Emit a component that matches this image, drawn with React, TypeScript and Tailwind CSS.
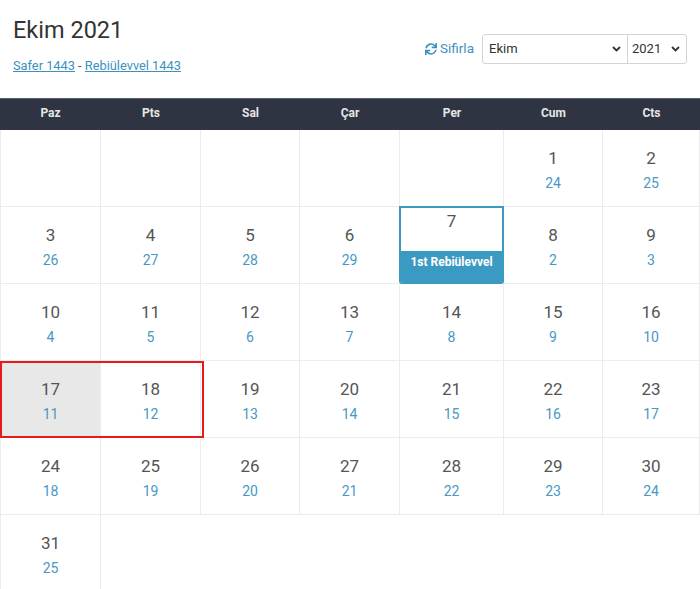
import { FaSync } from "react-icons/fa";

const days = ["Paz", "Pts", "Sal", "Çar", "Per", "Cum", "Cts"];

type Cell = { d: number; h: number } | null;

const cells: Cell[] = [
  null, null, null, null, null,
  { d: 1, h: 24 }, { d: 2, h: 25 },
  ...Array.from({ length: 29 }, (_, i) => {
    const d = i + 3;
    const h = d <= 6 ? d + 23 : d - 6;
    return { d, h };
  }),
];

const cols = "grid grid-cols-[101px_100px_99px_100px_104px_99px_97px]";

function DayCell({ cell, idx }: { cell: Cell; idx: number }) {
  const base = "h-[77px] border-b border-r border-[#ececec]";
  if (!cell) {
    return <div className={`${base} ${idx === 0 ? "border-l" : ""}`} />;
  }
  if (cell.d === 7) {
    return (
      <div className={`${base} relative`}>
        <div className="absolute -left-px -top-px -right-px -bottom-px flex flex-col border-2 border-[#3b9ac2] rounded-b-[3px] overflow-hidden">
          <div className="flex-1 bg-white text-center text-[17px] leading-[20px] text-[#555] pt-[3px]">
            7
          </div>
          <div className="h-[31px] bg-[#3b9ac2] text-center text-[12px] font-bold text-white pt-[2px]">
            1st Rebiülevvel
          </div>
        </div>
      </div>
    );
  }
  const col = idx % 7;
  return (
    <div
      className={`${base} ${col === 0 ? "border-l" : ""} ${cell.d === 17 ? "bg-[#e8e8e8]" : "bg-white"} flex flex-col items-center pt-[18px]`}
    >
      <span className="text-[17px] leading-[20px] text-[#555]">{cell.d}</span>
      <span className="text-[14px] leading-[18px] mt-[6px] text-[#4898c4]">{cell.h}</span>
    </div>
  );
}

export default function App() {
  return (
    <div className="w-[700px] h-[589px] overflow-hidden bg-white font-['Roboto',sans-serif]">
      <div className="h-[98px] flex justify-between px-[13px]">
        <div className="pt-[15px]">
          <h1 className="text-[23.5px] leading-[30px] text-[#333]">Ekim 2021</h1>
          <div className="mt-[11px] text-[12.8px] text-[#555]">
            <a className="underline text-[#3d91bd]">Safer 1443</a> -{" "}
            <a className="underline text-[#3d91bd]">Rebiülevvel 1443</a>
          </div>
        </div>
        <div className="flex items-center pt-[1px] mb-[2px]">
          <span className="flex items-center gap-[3px] text-[13.5px] text-[#3d91bd] mr-[8px]">
            <FaSync className="text-[12px]" /> Sifirla
          </span>
          <div className="flex h-[30px] border border-[#d4d4d4] rounded-[3px] text-[13px] text-[#333]">
            <div className="w-[145px] flex items-center justify-between px-[6px] border-r border-[#d4d4d4]">
              <span>Ekim</span>
              <svg width="9" height="6" viewBox="0 0 9 6">
                <path d="M1 1l3.5 3.5L8 1" stroke="#333" strokeWidth="1.8" fill="none" />
              </svg>
            </div>
            <div className="w-[58px] flex items-center justify-between px-[4px] pr-[6px]">
              <span>2021</span>
              <svg width="9" height="6" viewBox="0 0 9 6">
                <path d="M1 1l3.5 3.5L8 1" stroke="#333" strokeWidth="1.8" fill="none" />
              </svg>
            </div>
          </div>
        </div>
      </div>
      <div className={`${cols} h-[32px] bg-[#2e3441] border-t border-[#555b66]`}>
        {days.map((d) => (
          <div key={d} className="flex items-center justify-center pb-[3px] text-[12px] font-bold text-[#e6e6e6]">
            {d}
          </div>
        ))}
      </div>
      <div className={`${cols} relative`}>
        {cells.map((c, i) => (
          <DayCell key={i} cell={c} idx={i} />
        ))}
        <div className="absolute left-0 top-[231px] w-[204px] h-[77px] border-2 border-[#e31b1b] pointer-events-none" />
      </div>
    </div>
  );
}
